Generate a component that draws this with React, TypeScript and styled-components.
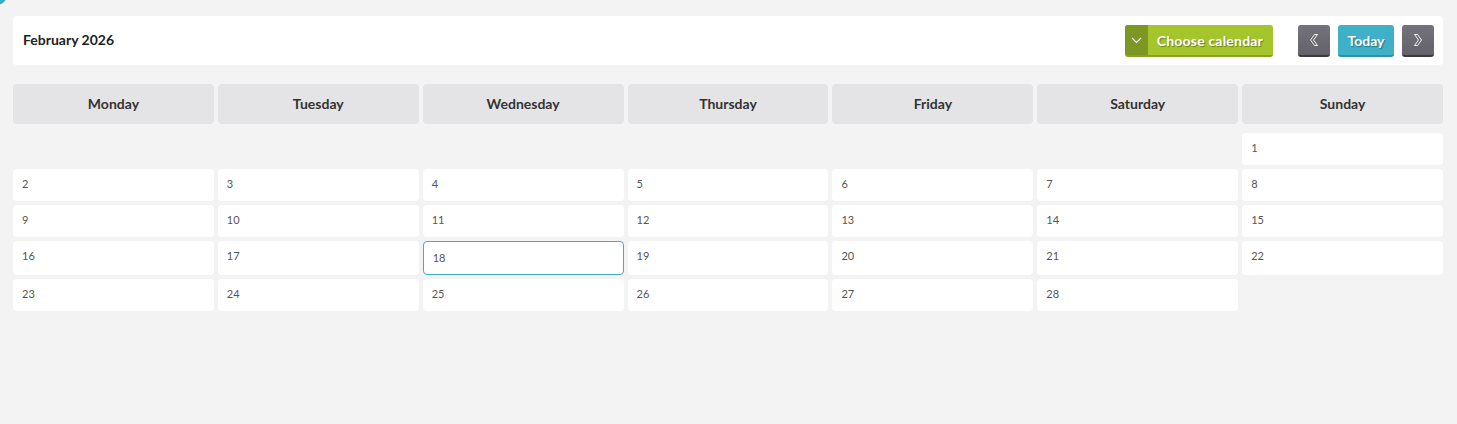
import React from "react";
import styled, { createGlobalStyle } from "styled-components";

const Global = createGlobalStyle`
  html, body { margin: 0; padding: 0; background: #f3f3f3; }
  body { font-family: Lato, "Open Sans", sans-serif; color: #333; }
  * { box-sizing: border-box; }
`;

const Page = styled.div`
  position: relative;
  min-height: 424px;
  padding: 16px 14px 0 13px;
  overflow: hidden;
`;

const CornerBlob = styled.div`
  position: absolute;
  left: -13px;
  top: -15px;
  width: 20px;
  height: 20px;
  border-radius: 50%;
  background: #3aafc6;
`;

const TopBar = styled.div`
  height: 49px;
  background: #fff;
  border-radius: 4px;
  display: flex;
  align-items: center;
  padding: 1px 9px 0 10px;
`;

const Title = styled.h1`
  margin: 0 0 3px;
  font-size: 14px;
  font-weight: 700;
  color: #222;
  flex: 1;
`;

const ChooseButton = styled.button`
  height: 32px;
  display: flex;
  align-items: stretch;
  padding: 0;
  border: none;
  border-radius: 3px;
  overflow: hidden;
  background: #a5c52c;
  border-bottom: 2px solid #86a31f;
  font-family: inherit;
  cursor: pointer;
  margin-right: 25px;
`;

const ChooseIcon = styled.span`
  width: 23px;
  background: #7d9822;
  display: flex;
  align-items: center;
  justify-content: center;
`;

const ChooseLabel = styled.span`
  display: flex;
  align-items: center;
  padding: 0 10px 0 9px;
  color: #fff;
  font-size: 14px;
  font-weight: 700;
  letter-spacing: 0.2px;
  text-shadow: 1px 1px 1px rgba(0, 0, 0, 0.35);
`;

const NavGroup = styled.div`
  display: flex;
  gap: 8px;
`;

const NavButton = styled.button<{ $tone: "gray" | "teal" }>`
  height: 32px;
  min-width: 32px;
  padding: ${(p) => (p.$tone === "teal" ? "0 9.5px" : "0")};
  border: none;
  border-radius: 3px;
  background: ${(p) =>
    p.$tone === "teal" ? "#3eb0c7" : "linear-gradient(#74737b, #64636b)"};
  border-bottom: 2px solid ${(p) => (p.$tone === "teal" ? "#2d93a8" : "#3a3a40")};
  color: #fff;
  font-family: inherit;
  font-size: 14px;
  font-weight: 700;
  text-shadow: 1px 1px 1px rgba(0, 0, 0, 0.35);
  display: flex;
  align-items: center;
  justify-content: center;
  cursor: pointer;
`;

const Grid = styled.div`
  display: grid;
  grid-template-columns: repeat(7, 1fr);
  column-gap: 4px;
  margin-top: 19px;
`;

const DayHead = styled.div`
  height: 40px;
  background: #e4e4e6;
  border-radius: 4px;
  display: flex;
  align-items: center;
  justify-content: center;
  padding-bottom: 1px;
  font-size: 14px;
  font-weight: 700;
  color: #333;
  margin-bottom: 9px;
`;

const Cell = styled.div<{ $empty?: boolean; $today?: boolean }>`
  min-height: 32px;
  margin-bottom: 4px;
  border-radius: 4px;
  background: ${(p) => (p.$empty ? "transparent" : "#fff")};
  border: ${(p) => (p.$today ? "1px solid #41adc6" : "none")};
  padding: ${(p) => (p.$today ? "9px 9px" : "8px 9px")};
  font-size: 11px;
  color: #555;
  line-height: 14px;
`;

const days = ["Monday", "Tuesday", "Wednesday", "Thursday", "Friday", "Saturday", "Sunday"];

const Chevron = ({ dir }: { dir: "left" | "right" }) => (
  <svg width="12" height="14" viewBox="0 0 12 14" fill="none">
    <polygon
      points={
        dir === "left"
          ? "6.5,1.5 9.5,1.5 5.5,7 9.5,12.5 6.5,12.5 2.5,7"
          : "5.5,1.5 2.5,1.5 6.5,7 2.5,12.5 5.5,12.5 9.5,7"
      }
      stroke="#fff"
      strokeWidth="0.9"
      strokeLinejoin="miter"
    />
  </svg>
);

export default function App() {
  const cells: (number | null)[] = [null, null, null, null, null, null];
  for (let d = 1; d <= 28; d++) cells.push(d);
  return (
    <Page>
      <Global />
      <CornerBlob />
      <TopBar>
        <Title>February 2026</Title>
        <ChooseButton>
          <ChooseIcon>
            <svg width="11" height="7" viewBox="0 0 11 7" fill="none">
              <path d="M1 1 L5.5 5.5 L10 1" stroke="#fff" strokeWidth="1.1" />
            </svg>
          </ChooseIcon>
          <ChooseLabel>Choose calendar</ChooseLabel>
        </ChooseButton>
        <NavGroup>
          <NavButton $tone="gray" aria-label="Previous">
            <Chevron dir="left" />
          </NavButton>
          <NavButton $tone="teal">Today</NavButton>
          <NavButton $tone="gray" aria-label="Next">
            <Chevron dir="right" />
          </NavButton>
        </NavGroup>
      </TopBar>
      <Grid>
        {days.map((d) => (
          <DayHead key={d}>{d}</DayHead>
        ))}
        {cells.map((c, i) => (
          <Cell key={i} $empty={c === null} $today={c === 18}>
            {c}
          </Cell>
        ))}
      </Grid>
    </Page>
  );
}
